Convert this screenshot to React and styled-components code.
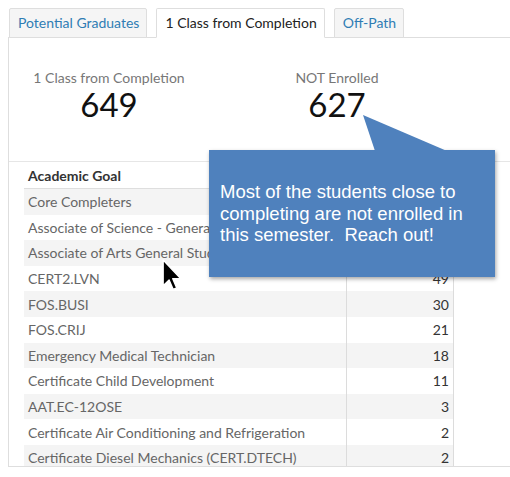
import React from 'react';
import styled, { createGlobalStyle } from 'styled-components';

const GlobalStyle = createGlobalStyle`
  html, body {
    margin: 0;
    padding: 0;
    background: #fff;
  }
  body {
    padding: 8px 0 0 8px;
    font-family: Lato, "Open Sans", sans-serif;
    overflow: hidden;
  }
`;

const rows = [
  ['Core Completers', ''],
  ['Associate of Science - General Studies', ''],
  ['Associate of Arts General Studies', ''],
  ['CERT2.LVN', 49],
  ['FOS.BUSI', 30],
  ['FOS.CRIJ', 21],
  ['Emergency Medical Technician', 18],
  ['Certificate Child Development', 11],
  ['AAT.EC-12OSE', 3],
  ['Certificate Air Conditioning and Refrigeration', 2],
  ['Certificate Diesel Mechanics (CERT.DTECH)', 2]
];

class App extends React.Component {
  render() {
    return (
      <Page>
        <GlobalStyle />
        <TabBar>
          <Tab>Potential Graduates</Tab>
          <Tab active>1 Class from Completion</Tab>
          <Tab>Off-Path</Tab>
        </TabBar>
        <Panel>
          <Stats>
            <Stat>
              <StatLabel>1 Class from Completion</StatLabel>
              <StatNumber>649</StatNumber>
            </Stat>
            <Stat>
              <StatLabel>NOT Enrolled</StatLabel>
              <StatNumber>627</StatNumber>
            </Stat>
          </Stats>
          <Table>
            <thead>
              <tr>
                <HeadCell>Academic Goal</HeadCell>
                <HeadCell right></HeadCell>
              </tr>
            </thead>
            <tbody>
              {rows.map((r, i) => (
                <Row key={i} striped={i % 2 === 0}>
                  <NameCell>{r[0]}</NameCell>
                  <CountCell>{r[1]}</CountCell>
                </Row>
              ))}
            </tbody>
          </Table>
        </Panel>
        <Cursor viewBox="0 0 13 21">
          <path d="M0.7 0.7 L0.7 17.5 L4.6 13.8 L7.3 20 L9.6 19 L7 12.9 L12.3 12.9 Z" fill="#000" stroke="#fff" strokeWidth="0.9" strokeLinejoin="round" />
        </Cursor>
        <Callout>
          <Pointer viewBox="0 0 86 36">
            <polygon points="0,0 12,36 84,36" fill="#4f81bd" />
          </Pointer>
          <Bubble>
            Most of the students close to completing are not enrolled in this semester.&nbsp; Reach out!
          </Bubble>
        </Callout>
      </Page>
    );
  }
}

var Page = styled.div`
  position: relative;
  width: 502px;
  height: 469px;
`;
var TabBar = styled.div`
  display: flex;
  gap: 9px;
  padding-left: 1px;
`;
var Tab = styled.div`
  height: 28px;
  line-height: 28px;
  padding: 0 7px 0 8px;
  font-size: 14px;
  color: ${props => props.active ? '#222' : '#2f7db4'};
  background: ${props => props.active ? '#fff' : '#f5f5f5'};
  border: 1px solid #dedede;
  border-bottom: ${props => props.active ? '1px solid #fff' : '1px solid #dedede'};
  border-radius: 2px 2px 0 0;
  margin-bottom: -1px;
  position: relative;
  z-index: 1;
`;
var Panel = styled.div`
  height: 428px;
  border-top: 1px solid #dedede;
  border-left: 1px solid #dedede;
  border-bottom: 1px solid #dedede;
  overflow: hidden;
`;
var Stats = styled.div`
  display: flex;
  gap: 28px;
  height: 123px;
  border-bottom: 1px solid #e6e6e6;
`;
var Stat = styled.div`
  width: 200px;
  display: flex;
  flex-direction: column;
  align-items: center;
  padding-top: 31px;
`;
var StatLabel = styled.div`
  font-size: 14px;
  color: #777;
  line-height: 18px;
`;
var StatNumber = styled.div`
  font-size: 33px;
  color: #111;
  line-height: 34px;
`;
var Table = styled.table`
  margin-left: 15px;
  width: 430px;
  border-collapse: collapse;
  font-size: 14px;
`;
var HeadCell = styled.th`
  height: 26px;
  padding: 0 4px;
  text-align: ${props => props.right ? 'right' : 'left'};
  font-weight: 700;
  color: #333;
  border-bottom: 1px solid #dedede;
`;
var Row = styled.tr`
  background: ${props => props.striped ? '#f4f4f4' : '#fff'};
`;
var NameCell = styled.td`
  width: 314px;
  height: 25.6px;
  padding: 0 4px;
  color: #666;
  border-right: 1px solid #dcdcdc;
  white-space: nowrap;
`;
var CountCell = styled.td`
  padding: 0 4px;
  text-align: right;
  color: #333;
  border-right: 1px solid #dcdcdc;
`;
var Cursor = styled.svg`
  position: absolute;
  left: 154px;
  top: 251px;
  width: 20px;
  height: 32px;
`;
var Callout = styled.div`
  position: absolute;
  left: 201px;
  top: 107px;
  width: 286px;
  padding-top: 35px;
`;
var Pointer = styled.svg`
  position: absolute;
  left: 154px;
  top: 0;
  width: 86px;
  height: 36px;
  display: block;
`;
var Bubble = styled.div`
  height: 127px;
  box-sizing: border-box;
  background: #4f81bd;
  box-shadow: 1px 2px 4px rgba(0, 0, 0, 0.35);
  padding: 31px 20px 0 11px;
  color: #fff;
  font-family: "Liberation Sans", Arial, sans-serif;
  font-size: 18.5px;
  line-height: 21.7px;
`;

export default App;
